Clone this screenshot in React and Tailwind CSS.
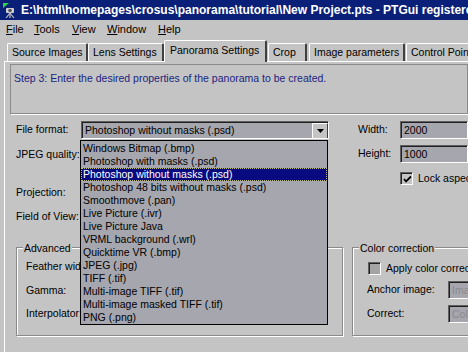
import React from "react";

const items = [
  "Windows Bitmap (.bmp)",
  "Photoshop with masks (.psd)",
  "Photoshop without masks (.psd)",
  "Photoshop 48 bits without masks (.psd)",
  "Smoothmove (.pan)",
  "Live Picture (.ivr)",
  "Live Picture Java",
  "VRML background (.wrl)",
  "Quicktime VR (.bmp)",
  "JPEG (.jpg)",
  "TIFF (.tif)",
  "Multi-image TIFF (.tif)",
  "Multi-image masked TIFF (.tif)",
  "PNG (.png)",
];

function Tab({ children, w }) {
  return (
    <div
      className={`h-[18px] mt-[4px] shrink-0 border-t border-l border-r-2 border-t-white border-l-white border-r-[#404040] rounded-t-[2px] flex items-center pl-[4px] ${w}`}
    >
      {children}
    </div>
  );
}

function Sunken({ className, children }) {
  return (
    <div
      className={`border-t border-l border-t-[#606060] border-l-[#606060] border-b border-r border-b-white border-r-white ${className}`}
    >
      <div className="h-full w-full border-t border-l border-t-[#202020] border-l-[#202020] flex items-center pl-[2px] overflow-hidden">
        {children}
      </div>
    </div>
  );
}

export default function App() {
  return (
    <div
      className="w-[468px] h-[352px] overflow-hidden bg-[#c4c4c4] text-[10.5px] text-black relative"
      style={{ fontFamily: '"Liberation Sans", Arial, sans-serif' }}
    >
      {/* Title bar */}
      <div className="h-[20px] bg-[#0a1f78] flex items-center pl-[3px] gap-[4px] whitespace-nowrap">
        <svg width="14" height="15" viewBox="0 0 14 15" className="shrink-0">
          <polygon points="0,0 6,0 0,5" fill="#2fd04a" />
          <rect x="3" y="5" width="8" height="5" rx="1" fill="#d0d0d0" />
          <circle cx="7" cy="7.5" r="1.8" fill="#505060" />
          <line x1="7" y1="10" x2="3" y2="15" stroke="#c0c0c0" strokeWidth="1.2" />
          <line x1="7" y1="10" x2="11" y2="15" stroke="#c0c0c0" strokeWidth="1.2" />
          <line x1="7" y1="10" x2="7" y2="15" stroke="#c0c0c0" strokeWidth="1.2" />
        </svg>
        <span className="text-white font-bold text-[12px]">
          E:\html\homepages\crosus\panorama\tutorial\New Project.pts - PTGui registered
        </span>
      </div>

      {/* Menu bar */}
      <div className="h-[18px] flex items-center pl-[6px] whitespace-nowrap text-[11px]">
        <span className="w-[28px]"><u>F</u>ile</span>
        <span className="w-[38px]"><u>T</u>ools</span>
        <span className="w-[35px]"><u>V</u>iew</span>
        <span className="w-[51px]"><u>W</u>indow</span>
        <span><u>H</u>elp</span>
      </div>

      {/* Tabs */}
      <div className="h-[23px] flex items-end pl-[7px] whitespace-nowrap">
        <Tab w="w-[81px]">Source Images</Tab>
        <Tab w="w-[76px]">Lens Settings</Tab>
        <div className="h-[22px] w-[103px] shrink-0 border-t border-l border-r-2 border-t-white border-l-white border-r-[#404040] rounded-t-[2px] flex items-start pt-[2px] pl-[5px] bg-[#c4c4c4] relative z-10 -mb-[1px]">
          Panorama Settings
        </div>
        <div className="ml-[1px]"><Tab w="w-[39px]">Crop</Tab></div>
        <div className="ml-[2px]"><Tab w="w-[96px]">Image parameters</Tab></div>
        <div className="ml-[1px]"><Tab w="w-[80px]">Control Points</Tab></div>
      </div>

      {/* Panel */}
      <div className="h-[300px] ml-[4px] border-t border-l border-t-white border-l-white pl-[5px] pt-[2px]">
        <div className="h-[50px] border border-[#8a8a8a] shadow-[1px_1px_0_#ffffff] pl-[3px] pt-[6px] text-[#1a1f80] whitespace-nowrap">
          Step 3: Enter the desired properties of the panorama to be created.
        </div>

        <div className="flex mt-[7px]">
          {/* left column */}
          <div className="w-[343px] shrink-0 pl-[6px] flex flex-col">
            <div className="flex items-center h-[18px]">
              <span className="w-[65px] whitespace-nowrap">File format:</span>
              <Sunken className="w-[248px] h-[18px] bg-[#a6a6ae]">
                <div className="flex-1 whitespace-nowrap">Photoshop without masks (.psd)</div>
                <div className="w-[16px] h-[16px] bg-[#c4c4c4] border border-t-white border-l-white border-b-[#404040] border-r-[#404040] flex items-center justify-center">
                  <svg width="7" height="4" viewBox="0 0 7 4">
                    <polygon points="0,0 7,0 3.5,4" fill="#000" />
                  </svg>
                </div>
              </Sunken>
            </div>
            <div className="h-[16px] mt-[8px] flex items-center whitespace-nowrap">JPEG quality:</div>
            <div className="h-[16px] mt-[22px] flex items-center">Projection:</div>
            <div className="h-[16px] mt-[8px] flex items-center whitespace-nowrap">Field of View:</div>

            {/* Advanced group */}
            <div className="mt-[22px] w-[327px] h-[89px] border border-[#8a8a8a] shadow-[inset_1px_1px_0_#ffffff,1px_1px_0_#ffffff] relative pl-[9px] pt-[11px] flex flex-col">
              <span className="absolute -top-[7px] left-[6px] bg-[#c4c4c4] px-[1px]">Advanced</span>
              <div className="h-[16px] flex items-center whitespace-nowrap">Feather width:</div>
              <div className="h-[16px] mt-[8px] flex items-center">Gamma:</div>
              <div className="h-[16px] mt-[7px] flex items-center">Interpolator:</div>
            </div>
          </div>

          {/* right column */}
          <div className="flex-1 min-w-0 pl-[5px] flex flex-col whitespace-nowrap">
            <div className="flex items-center h-[18px]">
              <span className="w-[42px] shrink-0">Width:</span>
              <Sunken className="flex-1 h-[18px] bg-[#a6a6ae]">2000</Sunken>
            </div>
            <div className="flex items-center h-[18px] mt-[6px]">
              <span className="w-[42px] shrink-0">Height:</span>
              <Sunken className="flex-1 h-[18px] bg-[#a6a6ae]">1000</Sunken>
            </div>
            <div className="flex items-center h-[13px] mt-[9px] pl-[42px] gap-[5px]">
              <Sunken className="w-[13px] h-[13px] bg-[#c4c4c4] shrink-0">
                <svg width="9" height="9" viewBox="0 0 9 9" className="-ml-[1px] shrink-0">
                  <polyline points="1,4 3,6.5 8,1.5" fill="none" stroke="#000" strokeWidth="1.8" />
                </svg>
              </Sunken>
              <span>Lock aspect ratio</span>
            </div>

            {/* Color correction group */}
            <div className="mt-[62px] h-[89px] border border-[#8a8a8a] shadow-[inset_1px_1px_0_#ffffff,1px_1px_0_#ffffff] relative pl-[14px] pt-[14px] flex flex-col -ml-[6px] w-[140px]">
              <span className="absolute -top-[7px] left-[6px] bg-[#c4c4c4] px-[1px]">Color correction</span>
              <div className="flex items-center h-[13px] pl-[1px] gap-[5px]">
                <Sunken className="w-[13px] h-[13px] bg-[#a4a4a4] shrink-0" />
                <span>Apply color correction</span>
              </div>
              <div className="flex items-center h-[18px] mt-[6px]">
                <span className="w-[81px] shrink-0">Anchor image:</span>
                <Sunken className="flex-1 h-[18px] bg-[#a6a6ae] text-[#8a8a8a]">Image 0</Sunken>
              </div>
              <div className="flex items-center h-[18px] mt-[6px]">
                <span className="w-[81px] shrink-0">Correct:</span>
                <Sunken className="flex-1 h-[18px] bg-[#a6a6ae] text-[#8a8a8a]">Color</Sunken>
              </div>
            </div>
          </div>
        </div>
      </div>

      {/* Dropdown list overlay */}
      <div className="absolute left-[80px] top-[140px] w-[248px] h-[185px] bg-[#a6a6ae] border border-black flex flex-col pt-[1px] whitespace-nowrap z-20">
        {items.map((it, i) => (
          <div
            key={it}
            className={
              i === 2
                ? "h-[13px] leading-[13px] pl-[2px] bg-[#0a0a80] text-white outline outline-1 outline-dotted outline-[#c0c060] -outline-offset-1"
                : "h-[13px] leading-[13px] pl-[2px]"
            }
          >
            {it}
          </div>
        ))}
      </div>
    </div>
  );
}
